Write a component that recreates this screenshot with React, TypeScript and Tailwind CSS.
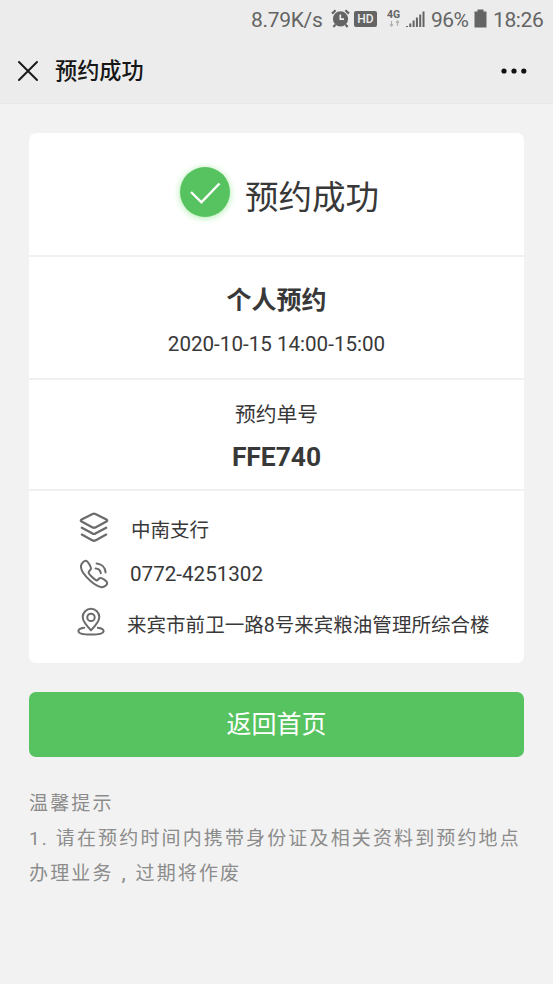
import React from 'react';

const LayersIcon = () => (
  <svg className="w-[34px] h-[34px] -mt-1" viewBox="0 0 34 34" fill="none" stroke="#6b6b6b" strokeWidth="2.3" strokeLinejoin="round" strokeLinecap="round">
    <path d="M15.6 4Q17 3.3 18.4 4L29.4 9.5Q31 10.5 29.4 11.5L18.4 17.4Q17 18.1 15.6 17.4L4.6 11.5Q3 10.5 4.6 9.5Z" />
    <path d="M4.8 17.8L15.6 23.6Q17 24.3 18.4 23.6L29.2 17.8" />
    <path d="M4.8 24.6L15.6 30.4Q17 31.1 18.4 30.4L29.2 24.6" />
  </svg>
);

const PhoneIcon = () => (
  <svg className="w-[34px] h-[34px]" viewBox="0 0 34 34" fill="none" stroke="#6b6b6b" strokeWidth="2" strokeLinejoin="round" strokeLinecap="round">
    <path d="M9 3.8C7.2 3.6 4.4 6 4 8.6C3.6 11.4 5.6 15.8 9.6 20.2C14.6 25.6 20 29.6 24.6 30.2C27.4 30.4 30.4 27.8 30.2 25.8C29.8 23.8 25.2 20.8 23.2 21C21.6 21.2 21.2 23.4 19.6 23.4C17.8 23 12 17.4 11.6 15.6C11.4 14 14 13.2 14 11.6C14 9.6 10.8 4 9 3.8Z" />
    <path d="M18.6 11.4C21.6 11.6 23.4 13.2 23.8 16.2" />
    <path d="M19.6 6.4C24.6 6.8 28.2 10.2 28.6 15.4" />
  </svg>
);

const LocationIcon = () => (
  <svg className="w-[34px] h-[34px] -mt-[3px]" viewBox="0 0 34 34" fill="none" stroke="#6b6b6b" strokeWidth="2" strokeLinejoin="round" strokeLinecap="round">
    <path d="M17 25.2C13.5 21.8 8.7 17 8.7 12.1A8.3 8.3 0 0 1 25.3 12.1C25.3 17 20.5 21.8 17 25.2Z" />
    <circle cx="17" cy="12.4" r="3.7" />
    <path d="M10.2 22.8C6.6 23.3 4.4 24.6 4.4 26C4.4 28.4 10 29.6 17 29.6S29.6 28.4 29.6 26C29.6 24.6 27.4 23.3 23.8 22.8" />
  </svg>
);

const StatusBar = () => (
  <div className="h-10 flex items-center justify-end pr-[9px] font-['Roboto',sans-serif] text-[20px] leading-[40px] text-[#646464]">
    <span className="w-[72px] text-[21px] tracking-[-0.3px] whitespace-nowrap">8.79K/s</span>
    <svg className="w-[19px] h-[19px] ml-2 -mt-[3px]" viewBox="0 0 19 19">
      <circle cx="9.5" cy="9.8" r="7.6" fill="#646464" />
      <path d="M1 4.6L4.6 1.2M18 4.6L14.4 1.2M4.4 15.6L2.4 18M14.6 15.6L16.6 18" stroke="#646464" strokeWidth="2.2" />
      <path d="M9.3 5.4V10.2H13" fill="none" stroke="#ececec" strokeWidth="1.7" />
    </svg>
    <span className="w-[23px] h-[16px] ml-[4px] -mt-[3px] rounded-[2px] bg-[#646464] text-[#ececec] text-[12px] leading-[16px] font-medium text-center">HD</span>
    <svg className="w-[38px] h-[20px] ml-[10px] -mt-[2px]" viewBox="0 0 38 20">
      <text x="0" y="8.5" fontSize="10.5" fontWeight="700" fill="#646464">4G</text>
      <path d="M4.5 12V17M3 15.4L4.5 17L6 15.4M10.5 17V12M9 13.6L10.5 12L12 13.6" stroke="#b0b0b0" strokeWidth="1.2" fill="none" />
      <path d="M20 18V17M23.3 18V14.5M26.6 18V11.5M29.9 18V8.5M33.2 18V5.5M36.5 18V2.5" stroke="#646464" strokeWidth="2" />
    </svg>
    <span className="w-[37px] ml-[6px] text-[21px] tracking-[-0.6px] whitespace-nowrap">96%</span>
    <svg className="w-[13px] h-[19px] ml-[6px] -mt-[3px]" viewBox="0 0 13 19" fill="#646464">
      <path d="M3.5 0.5H9.5V2.5H12.5V18.5H0.5V2.5H3.5Z" />
    </svg>
    <span className="w-[51px] ml-[6px] text-[21px] tracking-[-0.4px] whitespace-nowrap">18:26</span>
  </div>
);

const NavBar = () => (
  <div className="h-16 flex items-center border-b border-[#e6e6e6] pl-[18px] pr-[26px] pb-[2px] text-[#171717]">
    <svg className="w-5 h-5" viewBox="0 0 20 20" stroke="#171717" strokeWidth="1.9" strokeLinecap="round">
      <path d="M1 1L19 19M19 1L1 19" />
    </svg>
    <h1 className="ml-[17px] mt-px flex-1 text-[22.2px] leading-8 font-medium">预约成功</h1>
    <svg className="w-[26px] h-[6px]" viewBox="0 0 26 6" fill="#111">
      <circle cx="3" cy="3" r="2.6" />
      <circle cx="13" cy="3" r="2.6" />
      <circle cx="22.8" cy="3" r="2.6" />
    </svg>
  </div>
);

export default function App() {
  return (
    <div className="min-h-[984px] bg-[#f2f2f2] font-['Roboto','Noto_Sans_CJK_SC',sans-serif] text-[#383838]">
      <header className="bg-[#ececec]">
        <StatusBar />
        <NavBar />
      </header>

      <main className="px-[29px] pt-[29px]">
        <section className="h-[530px] rounded-[7px] bg-white divide-y-2 divide-[#f0f0f0]">
          {/* Result */}
          <div className="h-[124px] flex items-center justify-center pl-[6px]">
            <span className="w-[50px] h-[50px] -mt-1 rounded-full bg-[#57c360] shadow-[0_1px_7px_#a9eba9] flex items-center justify-center">
              <svg className="w-8 h-8" viewBox="0 0 32 32" fill="none" stroke="#fff" strokeWidth="2.4">
                <path d="M2 16L12.4 26.4L30.5 7.5" />
              </svg>
            </span>
            <span className="ml-[15px] mt-[7px] text-[33.5px] leading-[50px]">预约成功</span>
          </div>

          {/* Type and time */}
          <div className="h-[123px] pt-[26px] text-center">
            <p className="text-[25px] leading-9 font-bold">个人预约</p>
            <p className="mt-[10px] text-[20.6px] leading-[30px]">2020-10-15 14:00-15:00</p>
          </div>

          {/* Booking number */}
          <div className="h-[111px] pt-[20px] text-center">
            <p className="text-[20.8px] leading-[30px]">预约单号</p>
            <p className="mt-[9px] text-[26.4px] leading-9 font-bold">FFE740</p>
          </div>

          {/* Branch details */}
          <div className="pt-[20px] pl-[48px] text-[19.55px] leading-[34px]">
            <div className="h-9 flex items-center">
              <LayersIcon />
              <span className="ml-[20px] mt-[4px]">中南支行</span>
            </div>
            <div className="mt-[9px] h-9 flex items-center">
              <PhoneIcon />
              <span className="ml-[19px] text-[20.6px]">0772-4251302</span>
            </div>
            <div className="mt-[13px] -ml-[3px] h-9 flex items-center">
              <LocationIcon />
              <span className="ml-[19px] mt-[6px] whitespace-nowrap">来宾市前卫一路8号来宾粮油管理所综合楼</span>
            </div>
          </div>
        </section>

        <button className="mt-[29px] w-full h-[65px] rounded-[7px] bg-[#57c360] text-white text-[25px] leading-[65px]">
          返回首页
        </button>

        <div className="mt-[29px] text-[19px] leading-[35px] tracking-[2.14px] text-[#8c8c8c] whitespace-nowrap">
          <p>温馨提示</p>
          <p>1. 请在预约时间内携带身份证及相关资料到预约地点</p>
          <p>办理业务<span className="inline-block w-[22px] pl-[8px] font-medium">,</span>过期将作废</p>
        </div>
      </main>
    </div>
  );
}
